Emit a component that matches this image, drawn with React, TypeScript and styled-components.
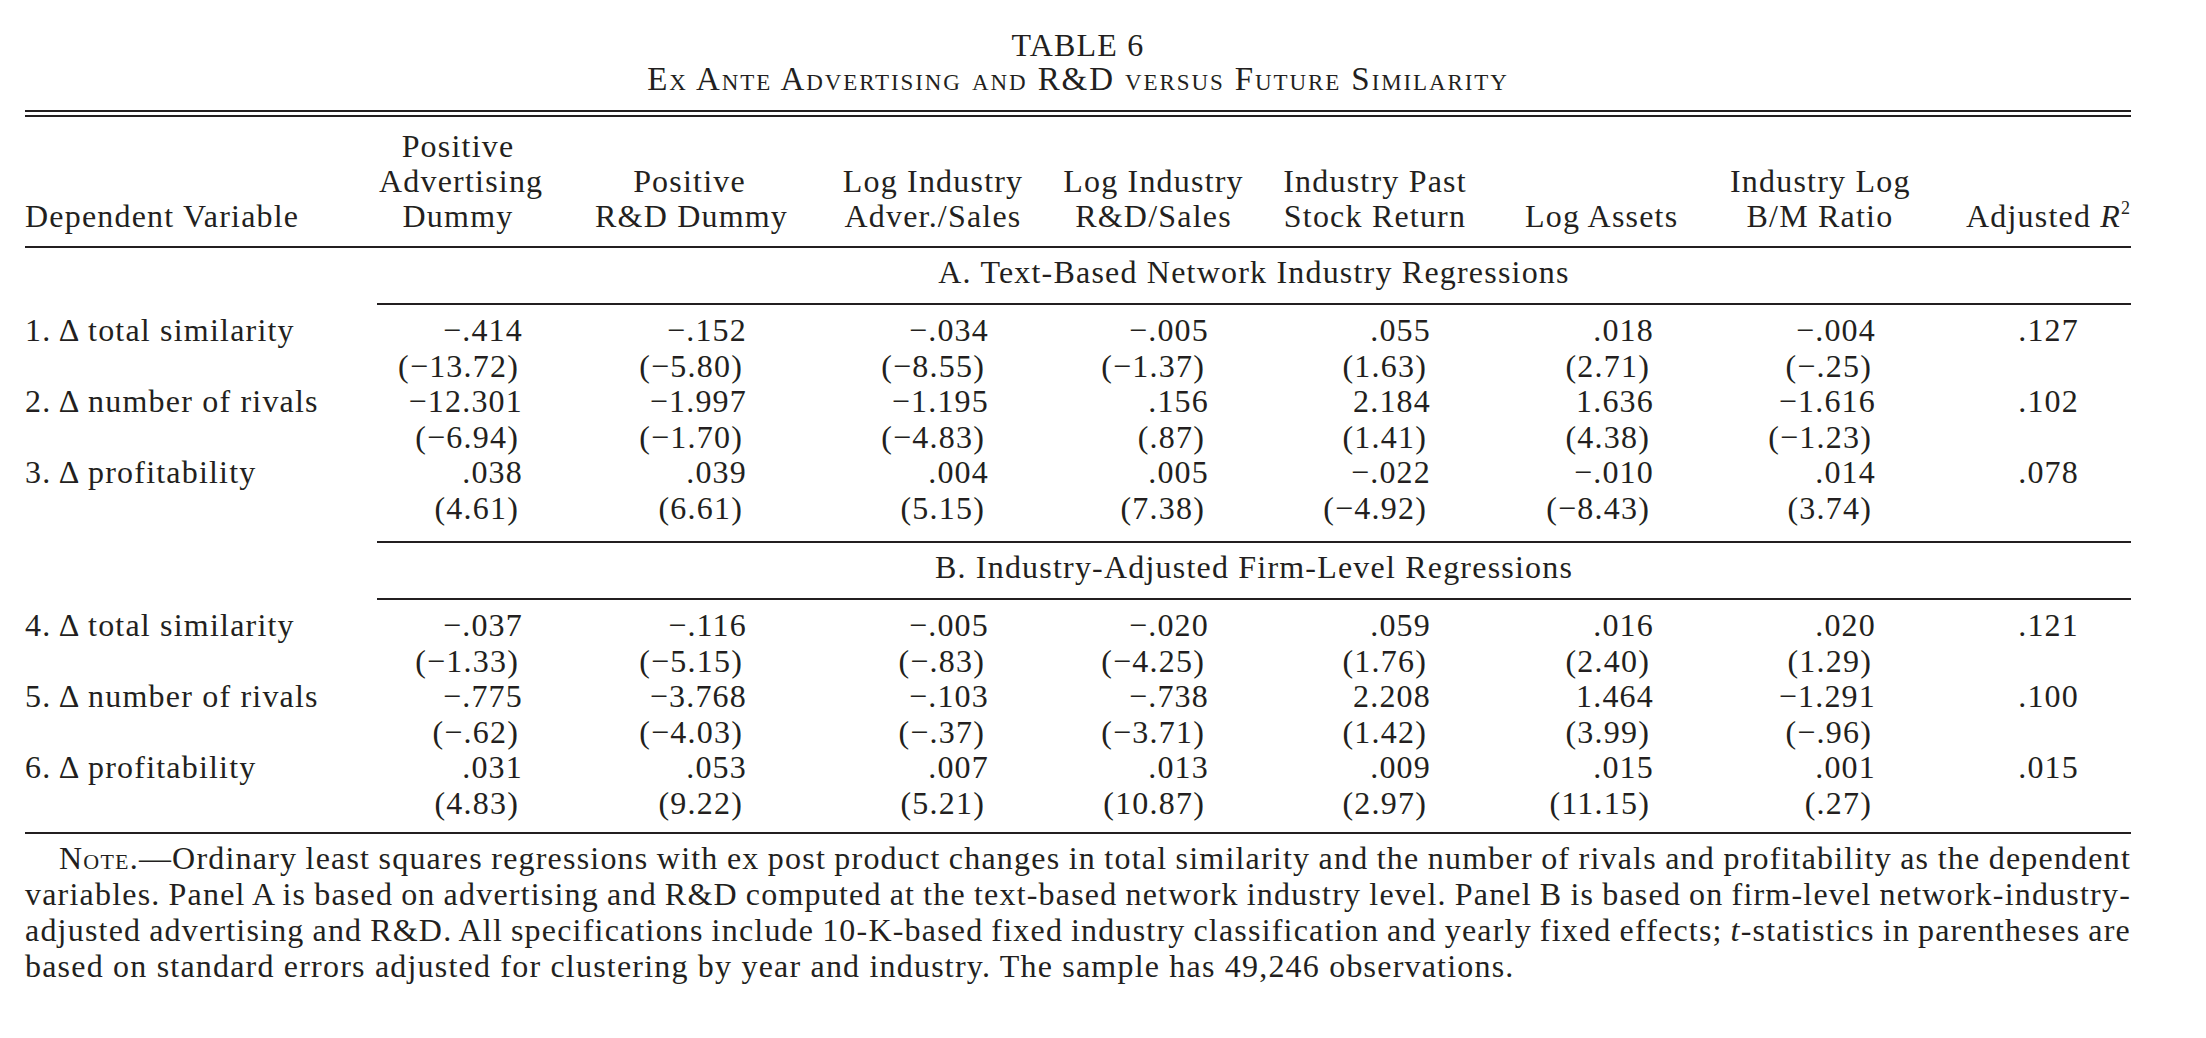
import React from 'react';
import styled, { createGlobalStyle } from 'styled-components';

interface ColumnSpec {
    gap: number;
    width: number;
    pad: number;
}

interface ResultRow {
    label: string;
    coef: string[];
    t: string[];
}

// widths of the header text, the space in front of each column, and the
// right inset that centres the decimal-aligned figures under the header
const COLUMNS: ColumnSpec[] = [
    { gap: 58, width: 158, pad: 14 },
    { gap: 58, width: 189, pad: 37 },
    { gap: 58, width: 182, pad: 35 },
    { gap: 38, width: 183, pad: 36 },
    { gap: 38, width: 184, pad: 36 },
    { gap: 58, width: 145, pad: 16 },
    { gap: 60, width: 180, pad: 34 },
    { gap: 56, width: 165, pad: 52 },
];

const TRACKS = `296px ${COLUMNS.map((c) => `${c.gap + c.width}px`).join(' ')}`;
const LABEL_TO_DATA = 352;

const panelA: ResultRow[] = [
    {
        label: '1. Δ total similarity',
        coef: ['−.414', '−.152', '−.034', '−.005', '.055', '.018', '−.004', '.127'],
        t: ['(−13.72)', '(−5.80)', '(−8.55)', '(−1.37)', '(1.63)', '(2.71)', '(−.25)'],
    },
    {
        label: '2. Δ number of rivals',
        coef: ['−12.301', '−1.997', '−1.195', '.156', '2.184', '1.636', '−1.616', '.102'],
        t: ['(−6.94)', '(−1.70)', '(−4.83)', '(.87)', '(1.41)', '(4.38)', '(−1.23)'],
    },
    {
        label: '3. Δ profitability',
        coef: ['.038', '.039', '.004', '.005', '−.022', '−.010', '.014', '.078'],
        t: ['(4.61)', '(6.61)', '(5.15)', '(7.38)', '(−4.92)', '(−8.43)', '(3.74)'],
    },
];

const panelB: ResultRow[] = [
    {
        label: '4. Δ total similarity',
        coef: ['−.037', '−.116', '−.005', '−.020', '.059', '.016', '.020', '.121'],
        t: ['(−1.33)', '(−5.15)', '(−.83)', '(−4.25)', '(1.76)', '(2.40)', '(1.29)'],
    },
    {
        label: '5. Δ number of rivals',
        coef: ['−.775', '−3.768', '−.103', '−.738', '2.208', '1.464', '−1.291', '.100'],
        t: ['(−.62)', '(−4.03)', '(−.37)', '(−3.71)', '(1.42)', '(3.99)', '(−.96)'],
    },
    {
        label: '6. Δ profitability',
        coef: ['.031', '.053', '.007', '.013', '.009', '.015', '.001', '.015'],
        t: ['(4.83)', '(9.22)', '(5.21)', '(10.87)', '(2.97)', '(11.15)', '(.27)'],
    },
];

const GlobalStyle = createGlobalStyle`
  html, body {
    margin: 0;
    padding: 0;
    background: #ffffff;
  }
  body {
    font-family: "Liberation Serif", "Times New Roman", serif;
    font-size: 32px;
    letter-spacing: 1.2px;
    color: #231f20;
  }
`;

const Page = styled.div`
  width: 2206px;
  min-height: 1038px;
  box-sizing: border-box;
  padding: 28px 75px 0 25px;
`;

const Caption = styled.div`
  text-align: center;
  line-height: 34px;
`;

const CaptionTitle = styled.div`
  text-transform: uppercase;
`;

const CaptionSubtitle = styled.div`
  font-variant: small-caps;
  font-size: 33px;
  letter-spacing: 1.9px;
`;

const DoubleRule = styled.div`
  margin-top: 14px;
  height: 3px;
  border-top: 2px solid #231f20;
  border-bottom: 2px solid #231f20;
`;

const Rule = styled.div`
  height: 2px;
  background: #231f20;
`;

const Grid = styled.div<{ $pt: number; $pb: number; $lh: number }>`
  display: grid;
  grid-template-columns: ${TRACKS};
  align-items: end;
  line-height: ${(p) => p.$lh}px;
  padding: ${(p) => p.$pt}px 0 ${(p) => p.$pb}px;
`;

const LabelCell = styled.div`
  white-space: nowrap;
  text-align: left;
`;

const HeadCell = styled.div<{ $gap: number }>`
  padding-left: ${(p) => p.$gap}px;
  text-align: center;
  white-space: nowrap;
`;

const NumCell = styled.div<{ $pad: number; $paren?: boolean }>`
  text-align: right;
  white-space: nowrap;
  padding-right: ${(p) => p.$pad + (p.$paren ? 4 : 0)}px;
`;

const PanelTitle = styled.div<{ $ruleAbove?: boolean }>`
  margin-left: ${LABEL_TO_DATA}px;
  padding: 7px 0 13px;
  line-height: 35px;
  text-align: center;
  border-bottom: 2px solid #231f20;
  border-top: ${(p) => (p.$ruleAbove ? '2px solid #231f20' : 'none')};
`;

const Italic = styled.i`
  font-style: italic;
`;

const Sup = styled.sup`
  font-size: 18px;
  line-height: 0;
  vertical-align: 13px;
`;

const Note = styled.div`
  padding-top: 6px;
  line-height: 36px;
`;

const NoteLine = styled.div<{ $justify?: boolean; $indent?: boolean }>`
  text-align: ${(p) => (p.$justify ? 'justify' : 'left')};
  text-align-last: ${(p) => (p.$justify ? 'justify' : 'left')};
  word-spacing: ${(p) => (p.$justify ? -2 : 0)}px;
  text-indent: ${(p) => (p.$indent ? 34 : 0)}px;
  white-space: nowrap;
`;

const SmallCaps = styled.span`
  font-variant: small-caps;
`;

const headers: React.ReactNode[] = [
    <>Positive<br />Advertising<br />Dummy</>,
    <>Positive<br />R&amp;D Dummy</>,
    <>Log Industry<br />Adver./Sales</>,
    <>Log Industry<br />R&amp;D/Sales</>,
    <>Industry Past<br />Stock Return</>,
    <>Log Assets</>,
    <>Industry Log<br />B/M Ratio</>,
    <>Adjusted <Italic>R</Italic><Sup>2</Sup></>,
];

const PanelRows: React.FC<{ rows: ResultRow[]; pb: number }> = ({ rows, pb }) => (
    <Grid $pt={8} $pb={pb} $lh={35.5}>
        {rows.map((row) => (
            <React.Fragment key={row.label}>
                <LabelCell>{row.label}</LabelCell>
                {row.coef.map((v, i) => (
                    <NumCell key={`c${i}`} $pad={COLUMNS[i].pad}>{v}</NumCell>
                ))}
                <LabelCell>&nbsp;</LabelCell>
                {COLUMNS.map((c, i) => (
                    <NumCell key={`t${i}`} $pad={c.pad} $paren>{row.t[i] ?? ''}</NumCell>
                ))}
            </React.Fragment>
        ))}
    </Grid>
);

const App: React.FC = () => {
    return (
        <Page>
            <GlobalStyle />
            <Caption>
                <CaptionTitle>Table 6</CaptionTitle>
                <CaptionSubtitle>Ex Ante Advertising and R&amp;D versus Future Similarity</CaptionSubtitle>
            </Caption>
            <DoubleRule />
            <Grid $pt={12} $pb={12} $lh={35}>
                <LabelCell>Dependent Variable</LabelCell>
                {headers.map((h, i) => (
                    <HeadCell key={i} $gap={COLUMNS[i].gap}>{h}</HeadCell>
                ))}
            </Grid>
            <Rule />
            <PanelTitle>A. Text-Based Network Industry Regressions</PanelTitle>
            <PanelRows rows={panelA} pb={15} />
            <PanelTitle $ruleAbove>B. Industry-Adjusted Firm-Level Regressions</PanelTitle>
            <PanelRows rows={panelB} pb={11} />
            <Rule />
            <Note>
                <NoteLine $justify $indent>
                    <SmallCaps>Note.</SmallCaps>—Ordinary least squares regressions with ex post product changes in total similarity and the number of rivals and profitability as the dependent
                </NoteLine>
                <NoteLine $justify>
                    variables. Panel A is based on advertising and R&amp;D computed at the text-based network industry level. Panel B is based on firm-level network-industry-
                </NoteLine>
                <NoteLine $justify>
                    adjusted advertising and R&amp;D. All specifications include 10-K-based fixed industry classification and yearly fixed effects; <Italic>t</Italic>-statistics in parentheses are
                </NoteLine>
                <NoteLine>
                    based on standard errors adjusted for clustering by year and industry. The sample has 49,246 observations.
                </NoteLine>
            </Note>
        </Page>
    );
};

export default App;
